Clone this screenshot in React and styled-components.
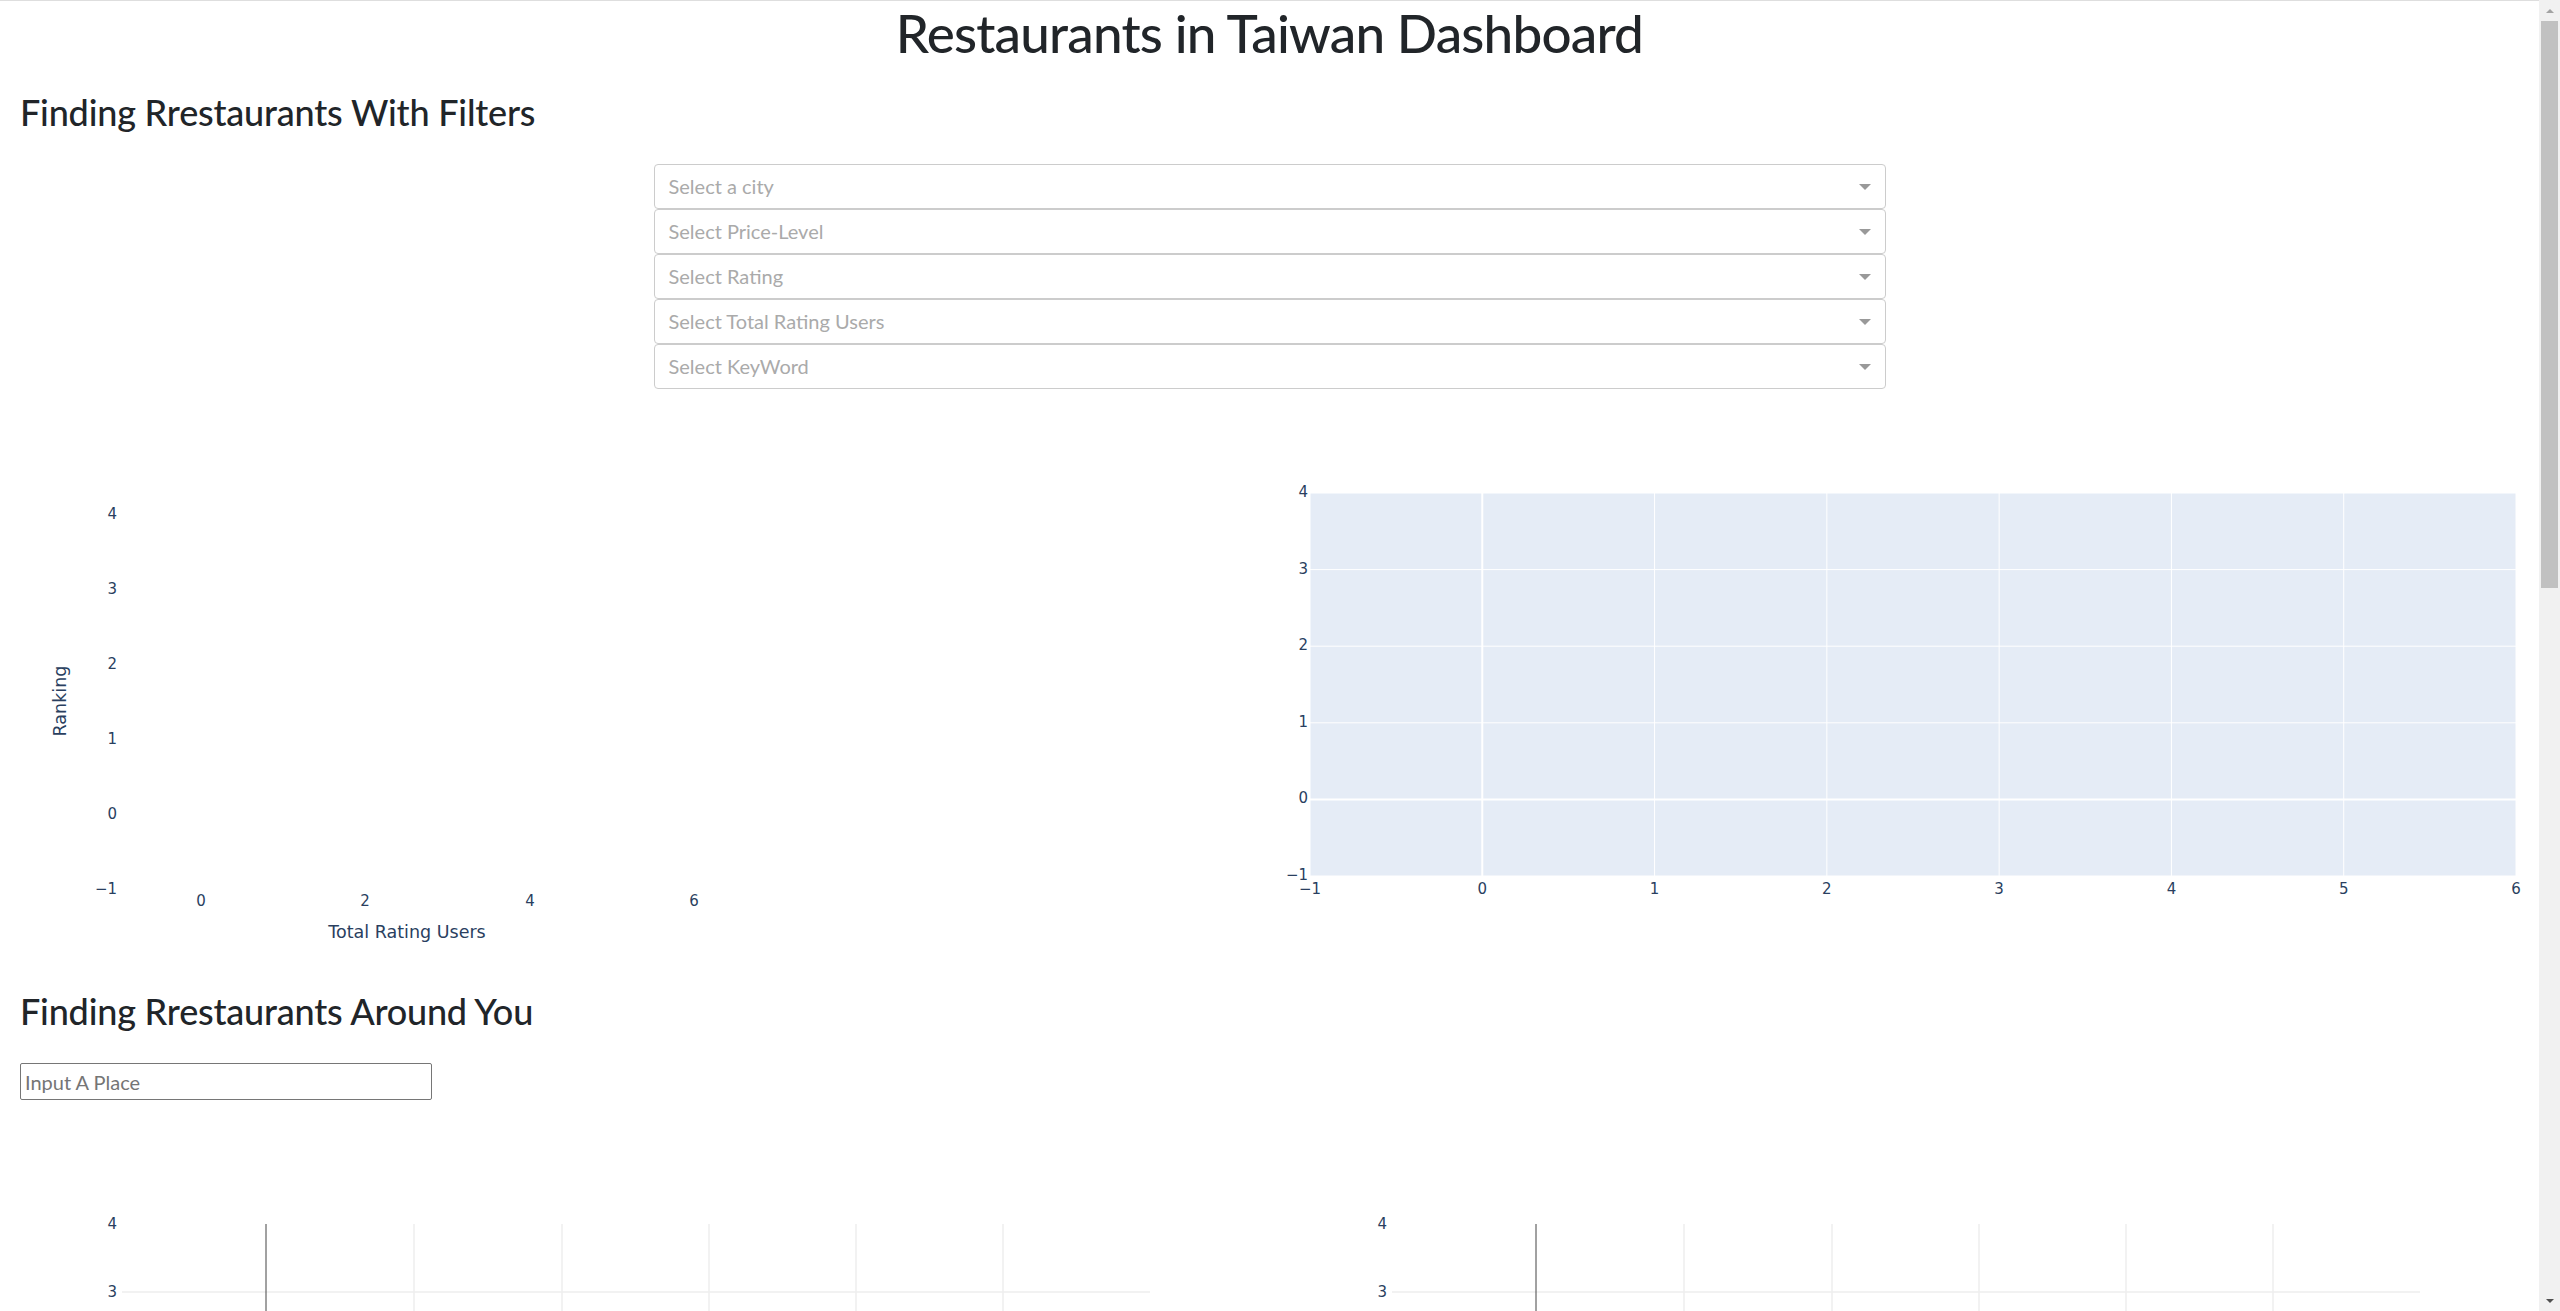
import React from 'react'
import styled, { createGlobalStyle } from 'styled-components'

const GlobalStyle = createGlobalStyle`
  html, body {
    margin: 0;
    padding: 0;
    background: #fff;
  }
  body {
    font-family: Lato, "Noto Sans", sans-serif;
    color: #212529;
  }
`

const Page = styled.div`
  display: flex;
  align-items: flex-start;
`

const Main = styled.main`
  flex: 1;
  min-width: 0;
  border-top: 1px solid #dedede;
`

// browser scrollbar as it shows in the screenshot
const ScrollRail = styled.div`
  position: sticky;
  top: 0;
  flex: 0 0 21px;
  height: 100vh;
  display: flex;
  flex-direction: column;
  align-items: center;
  background: #f1f1f1;
`

const RailArrow = styled.div`
  height: 21px;
  display: flex;
  align-items: center;
  justify-content: center;
  &::before {
    content: '';
    border-style: solid;
    border-color: ${p => (p.$up ? 'transparent transparent #a3a3a3' : '#505050 transparent transparent')};
    border-width: ${p => (p.$up ? '0 4px 4px' : '4px 4px 0')};
  }
`

const RailThumb = styled.div`
  width: 17px;
  height: 567px;
  background: #c1c1c1;
`

const RailSpace = styled.div`
  flex: 1;
`

const Title = styled.h1`
  margin: 0;
  text-align: center;
  font-size: 53px;
  font-weight: 500;
  line-height: 1.22;
  letter-spacing: -0.8px;
`

const Section = styled.div`
  padding: 0 20px;
`

const SectionTitle = styled.h2`
  margin: ${p => p.$top}px 0 0;
  font-size: 36px;
  font-weight: 500;
  line-height: 1.2;
  letter-spacing: -0.2px;
`

const Filters = styled.div`
  width: 1232px;
  margin: 30px auto 0;
`

const SelectBox = styled.div`
  box-sizing: border-box;
  height: 45px;
  display: flex;
  align-items: center;
  justify-content: space-between;
  padding: 0 14px;
  border: 1px solid #ccc;
  border-radius: 4px;
  background: #fff;
`

const Placeholder = styled.span`
  color: #aaa;
  font-size: 20px;
`

const Caret = styled.span`
  width: 0;
  height: 0;
  border-style: solid;
  border-width: 6px 6px 2px;
  border-color: #999 transparent transparent;
  margin-top: 4px;
`

const PlaceInput = styled.input`
  box-sizing: border-box;
  display: block;
  width: 412px;
  height: 37px;
  margin-top: 30px;
  padding: 0 4px;
  border: 1px solid #767676;
  border-radius: 2px;
  font-family: Lato, "Noto Sans", sans-serif;
  font-size: 20px;
  color: #212529;
  &::placeholder {
    color: #757575;
  }
`

const ChartRow = styled.div`
  display: grid;
  grid-template-columns: 1fr 1fr;
  margin-top: ${p => p.$top}px;
`

const ChartSvg = styled.svg`
  display: block;
  width: 100%;
  height: ${p => p.$h}px;
  font-family: "DejaVu Sans", Verdana, sans-serif;
`

const Tick = styled.text`
  font-size: ${p => p.$size || 15}px;
  fill: #2a3f5f;
`

const filters = [
  'Select a city',
  'Select Price-Level',
  'Select Rating',
  'Select Total Rating Users',
  'Select KeyWord',
]

const num = v => (v < 0 ? '\u2212' + Math.abs(v) : String(v))

function Dropdown({ label }) {
  return (
    <SelectBox>
      <Placeholder>{label}</Placeholder>
      <Caret />
    </SelectBox>
  )
}

// empty scatter, no grid
function RankingChart() {
  const ys = [4, 3, 2, 1, 0, -1]
  const xs = [[0, 201], [2, 365], [4, 530], [6, 694]]
  return (
    <ChartSvg $h={563}>
      {ys.map((v, i) => (
        <Tick key={v} x={117} y={126 + i * 75} textAnchor="end">{num(v)}</Tick>
      ))}
      {xs.map(([v, x]) => (
        <Tick key={v} x={x} y={513} textAnchor="middle">{v}</Tick>
      ))}
      <Tick $size={17.5} x={407} y={545} textAnchor="middle">Total Rating Users</Tick>
      <Tick $size={17.5} x={66} y={308} textAnchor="middle" transform="rotate(-90 66 308)">
        Ranking
      </Tick>
    </ChartSvg>
  )
}

// empty plotly figure with default template
function EmptyGridChart() {
  const L = 40, T = 100, W = 1206, H = 383
  const xs = [-1, 0, 1, 2, 3, 4, 5, 6]
  const ys = [4, 3, 2, 1, 0, -1]
  const px = u => L + ((u + 1) * W) / 7
  const py = v => T + ((4 - v) * H) / 5
  return (
    <ChartSvg $h={563}>
      <rect x={L} y={T} width={W} height={H} fill="#e5ecf6" />
      {xs.map(u => (
        <line key={'x' + u} x1={px(u)} x2={px(u)} y1={T} y2={T + H}
          stroke="#fff" strokeWidth={u === 0 ? 2 : 1} />
      ))}
      {ys.map(v => (
        <line key={'y' + v} x1={L} x2={L + W} y1={py(v)} y2={py(v)}
          stroke="#fff" strokeWidth={v === 0 ? 2 : 1} />
      ))}
      {ys.map(v => (
        <Tick key={'ly' + v} x={L - 2} y={py(v) + 4} textAnchor="end">{num(v)}</Tick>
      ))}
      {xs.map(u => (
        <Tick key={'lx' + u} x={px(u)} y={T + H + 18} textAnchor="middle">{num(u)}</Tick>
      ))}
    </ChartSvg>
  )
}

// map-like scatter below the place search
function NearbyChart() {
  const T = 100, step = 68, rows = 9
  const gx = [266, 414, 562, 709, 856, 1003]
  const ys = Array.from({ length: rows + 1 }, (_, i) => 4 - i)
  const bottom = T + rows * step
  return (
    <ChartSvg $h={bottom + 90}>
      {ys.slice(1).map((v, i) => (
        <line key={'h' + v} x1={122} x2={1150} y1={T + (i + 1) * step} y2={T + (i + 1) * step}
          stroke="#eee" strokeWidth={1.5} />
      ))}
      {gx.slice(1).map(x => (
        <line key={'v' + x} x1={x} x2={x} y1={T} y2={bottom} stroke="#eee" strokeWidth={1.5} />
      ))}
      <line x1={gx[0]} x2={gx[0]} y1={T} y2={bottom} stroke="#444" strokeWidth={1} />
      {ys.map((v, i) => (
        <Tick key={'l' + v} x={117} y={T + i * step + 5} textAnchor="end">{num(v)}</Tick>
      ))}
    </ChartSvg>
  )
}

export default function App() {
  return (
    <Page>
      <GlobalStyle />
      <Main>
        <Title>Restaurants in Taiwan Dashboard</Title>
        <Section>
          <SectionTitle $top={25}>Finding Rrestaurants With Filters</SectionTitle>
          <Filters>
            {filters.map(f => <Dropdown key={f} label={f} />)}
          </Filters>
        </Section>
        <ChartRow $top={4}>
          <RankingChart />
          <EmptyGridChart />
        </ChartRow>
        <Section>
          <SectionTitle $top={34}>Finding Rrestaurants Around You</SectionTitle>
          <PlaceInput placeholder="Input A Place" />
        </Section>
        <ChartRow $top={24}>
          <NearbyChart />
          <NearbyChart />
        </ChartRow>
      </Main>
      <ScrollRail>
        <RailArrow $up />
        <RailThumb />
        <RailSpace />
        <RailArrow />
      </ScrollRail>
    </Page>
  )
}
